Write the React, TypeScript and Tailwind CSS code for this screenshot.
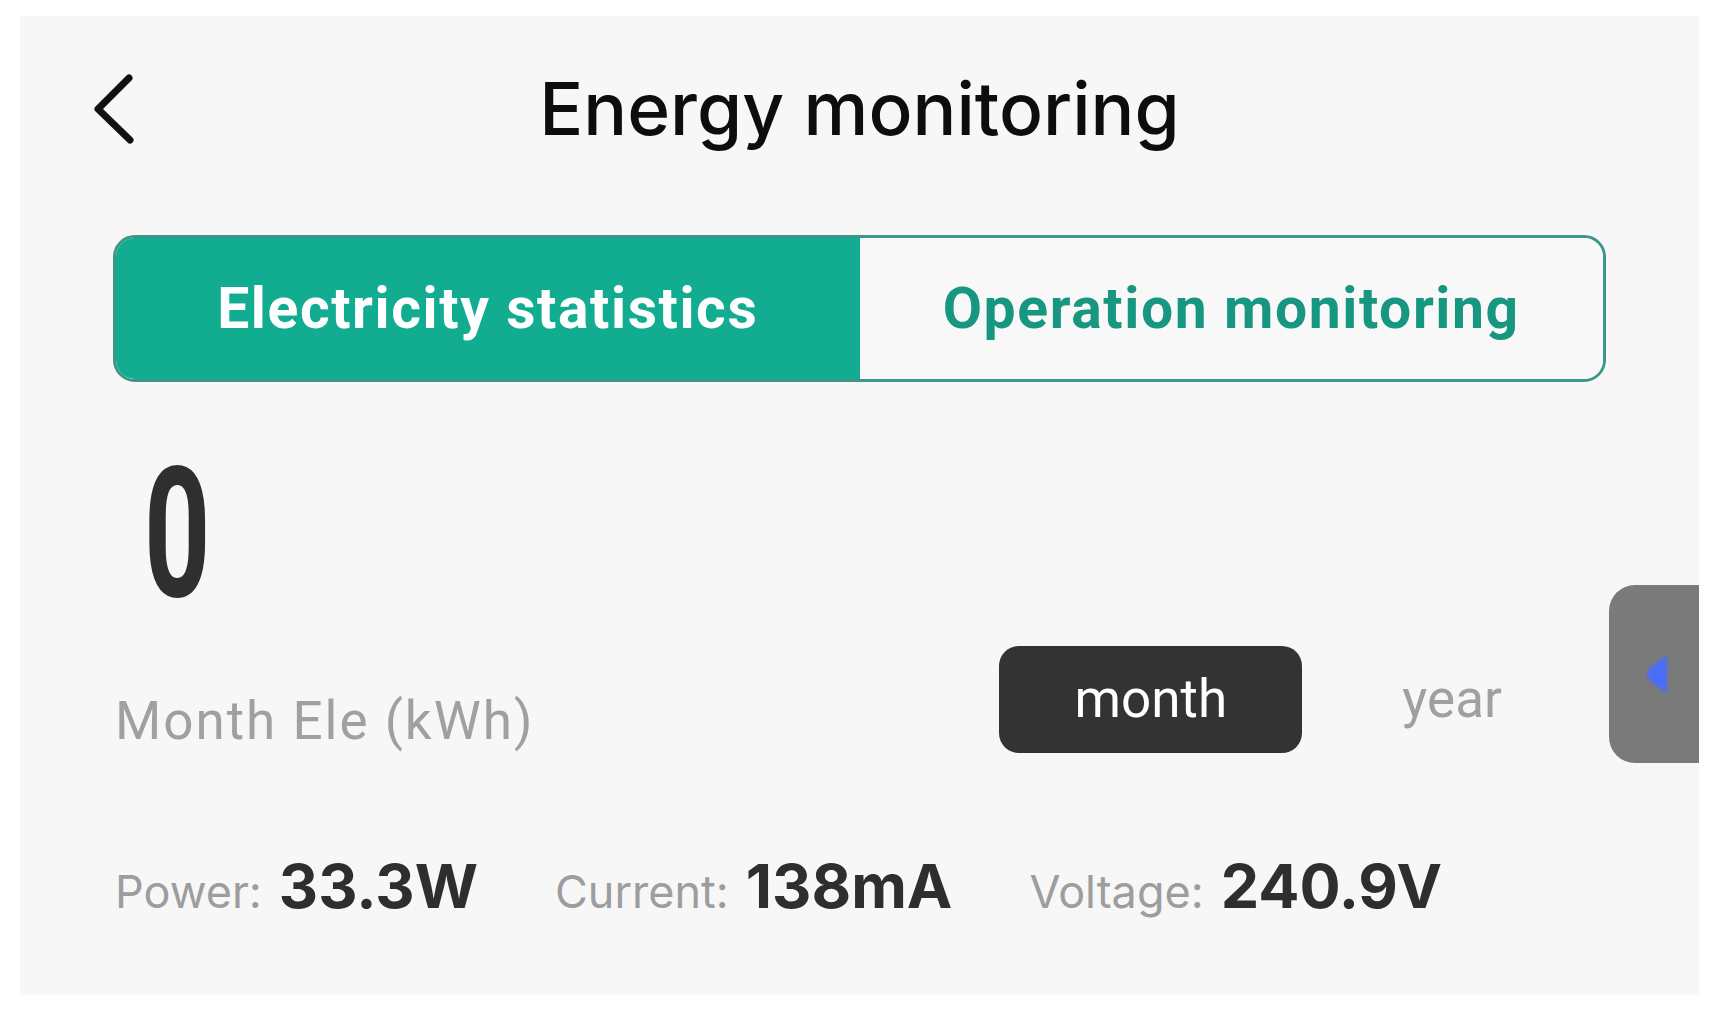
import { useState } from "react"

const roboto = "font-['Roboto','Liberation_Sans',sans-serif]"
const inter = "font-['Inter','Liberation_Sans',sans-serif]"

function BackChevron() {
  return (
    <svg width="42" height="72" viewBox="0 0 42 72" fill="none">
      <path d="M36 5 L5 36 L37 67" stroke="#111" strokeWidth="7" strokeLinecap="round" strokeLinejoin="round" />
    </svg>
  )
}

function Stat({ label, value }: { label: string; value: string }) {
  return (
    <div className="flex items-baseline gap-[17px]">
      <span className={`${inter} text-[45px] leading-none text-[#9d9d9d]`}>{label}</span>
      <span className={`${inter} text-[61px] leading-none font-bold text-[#2e2e2e]`}>{value}</span>
    </div>
  )
}

export default function App() {
  const [tab, setTab] = useState<"stats" | "ops">("stats")
  const [range, setRange] = useState<"month" | "year">("month")

  return (
    <div className="min-h-screen bg-white pt-[16px] pl-[20px]">
      <div className="relative w-[1679px] h-[979px] bg-[#f7f7f7] flex flex-col">
        {/* header */}
        <div className="grid grid-cols-[1fr_auto_1fr] items-center pt-[56px]">
          <button className="pl-[73px] justify-self-start">
            <BackChevron />
          </button>
          <h1 className={`${inter} text-[73px] leading-none font-medium text-[#0d0d0d]`}>Energy monitoring</h1>
          <div />
        </div>

        {/* tabs */}
        <div className="mx-[93px] mt-[90px] h-[147px] flex rounded-[22px] border-[3px] border-[#3c978a] overflow-hidden">
          <button
            onClick={() => setTab("stats")}
            className={`flex-1 flex items-center justify-center ${roboto} text-[57px] leading-none font-bold tracking-[1.6px] ${
              tab === "stats" ? "bg-[#12ad91] text-white" : "bg-[#f8f8f8] text-[#17977f]"
            }`}
          >
            Electricity statistics
          </button>
          <button
            onClick={() => setTab("ops")}
            className={`flex-1 flex items-center justify-center ${roboto} text-[57px] leading-none font-bold tracking-[1.6px] ${
              tab === "ops" ? "bg-[#12ad91] text-white" : "bg-[#f8f8f8] text-[#17977f]"
            }`}
          >
            Operation monitoring
          </button>
        </div>

        {/* big value */}
        <div className="mt-[62px] pl-[124px]">
          <span className={`inline-block origin-left scale-x-[0.64] ${roboto} text-[181px] leading-none font-bold text-[#2f2f2f]`}>
            0
          </span>
        </div>

        {/* label + range switch */}
        <div className="flex items-end justify-between pl-[95px] pr-[197px]">
          <span className={`${roboto} text-[53px] leading-none tracking-[2px] text-[#a0a0a0] mb-[5px]`}>Month Ele (kWh)</span>
          <div className="flex items-center gap-[100px] mt-[21px]">
            <button
              onClick={() => setRange("month")}
              className={`w-[303px] h-[107px] rounded-[20px] ${roboto} text-[53px] leading-none ${
                range === "month" ? "bg-[#333333] text-white" : "text-[#a0a0a0]"
              }`}
            >
              month
            </button>
            <button
              onClick={() => setRange("year")}
              className={`${roboto} text-[53px] leading-none ${
                range === "year" ? "bg-[#333333] text-white rounded-[20px] px-8 py-6" : "text-[#a0a0a0]"
              }`}
            >
              year
            </button>
          </div>
        </div>

        {/* live readings */}
        <div className="mt-[103px] pl-[95px] flex items-baseline gap-[77px]">
          <Stat label="Power:" value="33.3W" />
          <Stat label="Current:" value="138mA" />
          <Stat label="Voltage:" value="240.9V" />
        </div>

        {/* floating side handle */}
        <div className="absolute right-0 top-[569px] w-[90px] h-[178px] rounded-l-[26px] bg-[#7a7a7a]">
          <svg className="absolute left-[34px] top-[68px] blur-[1.5px]" width="26" height="42" viewBox="0 0 26 42">
            <path d="M24 2 C16 8 4 15 4 21 C4 28 16 35 24 40 Z" fill="#4b6cf6" />
          </svg>
        </div>
      </div>
    </div>
  )
}
